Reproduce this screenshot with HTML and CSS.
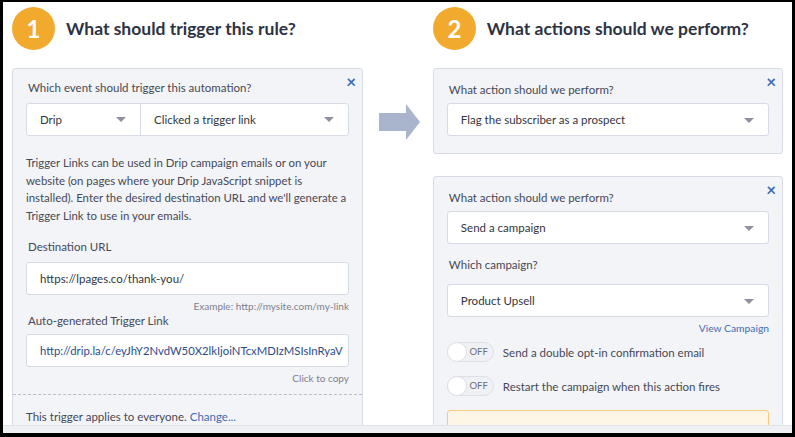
FILE: index.html
```html
<!DOCTYPE html>
<html lang="en">
<head>
    <meta charset="UTF-8">
    <title>Rule editor</title>
    <link rel="stylesheet" href="styles.css">
</head>
<body>

    <div class="frame">
        <div class="columns">
            <div class="column">
                <div class="step-head">
                    <span class="step-num">1</span>
                    <h2>What should trigger this rule?</h2>
                </div>
                <div class="panel">
                    <span class="close">&times;</span>
                    <div class="label">Which event should trigger this automation?</div>
                    <div class="select split">
                        <div class="part part-small">Drip <span class="caret"></span></div>
                        <div class="part part-big">Clicked a trigger link <span class="caret"></span></div>
                    </div>
                    <p class="help">Trigger Links can be used in Drip campaign emails or on your website (on pages where your Drip JavaScript snippet is installed). Enter the desired destination URL and we'll generate a Trigger Link to use in your emails.</p>
                    <div class="label">Destination URL</div>
                    <div class="input">https://lpages.co/thank-you/</div>
                    <div class="hint">Example: http://mysite.com/my-link</div>
                    <div class="label label-tight">Auto-generated Trigger Link</div>
                    <div class="input link-input">http://drip.la/c/eyJhY2NvdW50X2lkIjoiNTcxMDIzMSIsInRyaV</div>
                    <div class="hint">Click to copy</div>
                    <div class="panel-foot">This trigger applies to everyone. <a href="#">Change...</a></div>
                </div>
            </div>

            <div class="arrow-col">
                <svg width="42" height="38" viewBox="0 0 42 38">
                    <path d="M0 9 H27 V0 L41 18 L27 36 V27 H0 Z" fill="#a8b5cd"/>
                </svg>
            </div>

            <div class="column">
                <div class="step-head">
                    <span class="step-num">2</span>
                    <h2>What actions should we perform?</h2>
                </div>
                <div class="panel panel-short">
                    <span class="close">&times;</span>
                    <div class="label">What action should we perform?</div>
                    <div class="select">Flag the subscriber as a prospect <span class="caret"></span></div>
                </div>
                <div class="panel panel-open">
                    <span class="close">&times;</span>
                    <div class="label">What action should we perform?</div>
                    <div class="select">Send a campaign <span class="caret"></span></div>
                    <div class="label label-gap">Which campaign?</div>
                    <div class="select">Product Upsell <span class="caret"></span></div>
                    <div class="view-link"><a href="#">View Campaign</a></div>
                    <div class="toggle-row">
                        <span class="toggle"><span class="knob"></span><span class="off">OFF</span></span>
                        <span>Send a double opt-in confirmation email</span>
                    </div>
                    <div class="toggle-row">
                        <span class="toggle"><span class="knob"></span><span class="off">OFF</span></span>
                        <span>Restart the campaign when this action fires</span>
                    </div>
                    <div class="notice"></div>
                </div>
            </div>
        </div>
        <div class="bottom-bar"></div>
    </div>

</body>
</html>
```

FILE: styles.css
```css
body {
    margin: 0;
    background-color: #000;
    font-family: Lato, "Open Sans", sans-serif;
    color: #464955;
}
.frame {
    position: relative;
    height: 431px;
    margin: 2px 3px 0 3px;
    background-color: #fff;
    overflow: hidden;
}
.columns {
    display: flex;
    padding: 0 9px;
}
.column {
    width: 351px;
}
.arrow-col {
    width: 70px;
    padding-top: 102px;
    padding-left: 16px;
    box-sizing: border-box;
}
.step-head {
    display: flex;
    align-items: center;
    height: 52px;
    margin-bottom: 14px;
}
.step-num {
    width: 43px;
    height: 43px;
    border-radius: 50%;
    background-color: #f1aa2e;
    color: #fff;
    font-weight: bold;
    font-size: 24px;
    display: flex;
    align-items: center;
    justify-content: center;
    margin-right: 11px;
}
.step-head h2 {
    margin: 0;
    font-size: 17.5px;
    color: #2e3343;
}
.panel {
    position: relative;
    background-color: #f3f4f8;
    border: 1px solid #d7dbe5;
    border-radius: 3px;
    padding: 11px 13px 0 13px;
}
.close {
    position: absolute;
    top: 2px;
    right: 6px;
    color: #3d6cb4;
    font-size: 17px;
    font-weight: bold;
}
.label {
    font-size: 11.5px;
    line-height: 16px;
    margin-left: 2px;
    margin-bottom: 7px;
}
.select, .input {
    height: 33px;
    box-sizing: border-box;
    background-color: #fff;
    border: 1px solid #d7dbe5;
    border-radius: 3px;
    font-size: 11.5px;
    color: #33353d;
    display: flex;
    align-items: center;
    padding: 0 13px;
    position: relative;
}
.caret {
    position: absolute;
    right: 14px;
    top: 14px;
    border-left: 5px solid transparent;
    border-right: 5px solid transparent;
    border-top: 5px solid #8d929e;
}
.split {
    padding: 0;
}
.part {
    position: relative;
    height: 100%;
    display: flex;
    align-items: center;
    padding-left: 13px;
    box-sizing: border-box;
}
.part-small {
    width: 114px;
    border-right: 1px solid #d7dbe5;
}
.part-big {
    flex: 1;
}
.part .caret {
    top: 13px;
}
.help {
    font-size: 11.4px;
    line-height: 17.6px;
    margin: 18px 0 15px 0;
}
.input {
    white-space: nowrap;
}
.link-input {
    color: #2c4b8a;
    font-size: 11.3px;
}
.hint {
    text-align: right;
    font-size: 10px;
    color: #7d818c;
    line-height: 14px;
    margin-top: 4px;
}
.label-tight {
    margin-bottom: 5px;
}
.panel-foot {
    border-top: 1px dashed #b9bdc7;
    margin: 9px -13px 0 -13px;
    padding: 15px 13px 20px 13px;
    font-size: 11.5px;
}
a {
    color: #3d6cb4;
    text-decoration: none;
}
.column:last-child .panel {
    padding-top: 13px;
}
.column:last-child .panel > .label:first-of-type {
    margin-bottom: 5px;
}
.panel-short {
    padding-bottom: 17px;
    margin-bottom: 22px;
}
.label-gap {
    margin-top: 13px;
    margin-bottom: 11px;
}
.view-link {
    text-align: right;
    font-size: 10.3px;
    line-height: 14px;
    margin: 4px 0 7px 0;
}
.toggle-row {
    display: flex;
    align-items: center;
    font-size: 11.5px;
    margin-bottom: 14px;
}
.toggle {
    position: relative;
    flex: none;
    width: 47px;
    height: 20px;
    box-sizing: border-box;
    border: 1px solid #dde0e7;
    border-radius: 10px;
    background-color: #eff1f5;
    margin-right: 9px;
}
.knob {
    position: absolute;
    left: -1px;
    top: -1px;
    width: 20px;
    height: 20px;
    border-radius: 50%;
    background-color: #fff;
    border: 1px solid #dde0e7;
    box-sizing: border-box;
}
.off {
    position: absolute;
    right: 5px;
    top: 3px;
    font-size: 9.5px;
    line-height: 12px;
    color: #6b6f7a;
}
.notice {
    height: 40px;
    margin-top: 11px;
    border: 1px solid #f5cb80;
    border-radius: 3px;
    background-color: #fdf6e7;
}
.bottom-bar {
    position: absolute;
    left: 0;
    right: 0;
    bottom: 0;
    height: 7px;
    background-color: #eef0f4;
    border-top: 1px solid #dfe2e8;
}
```
